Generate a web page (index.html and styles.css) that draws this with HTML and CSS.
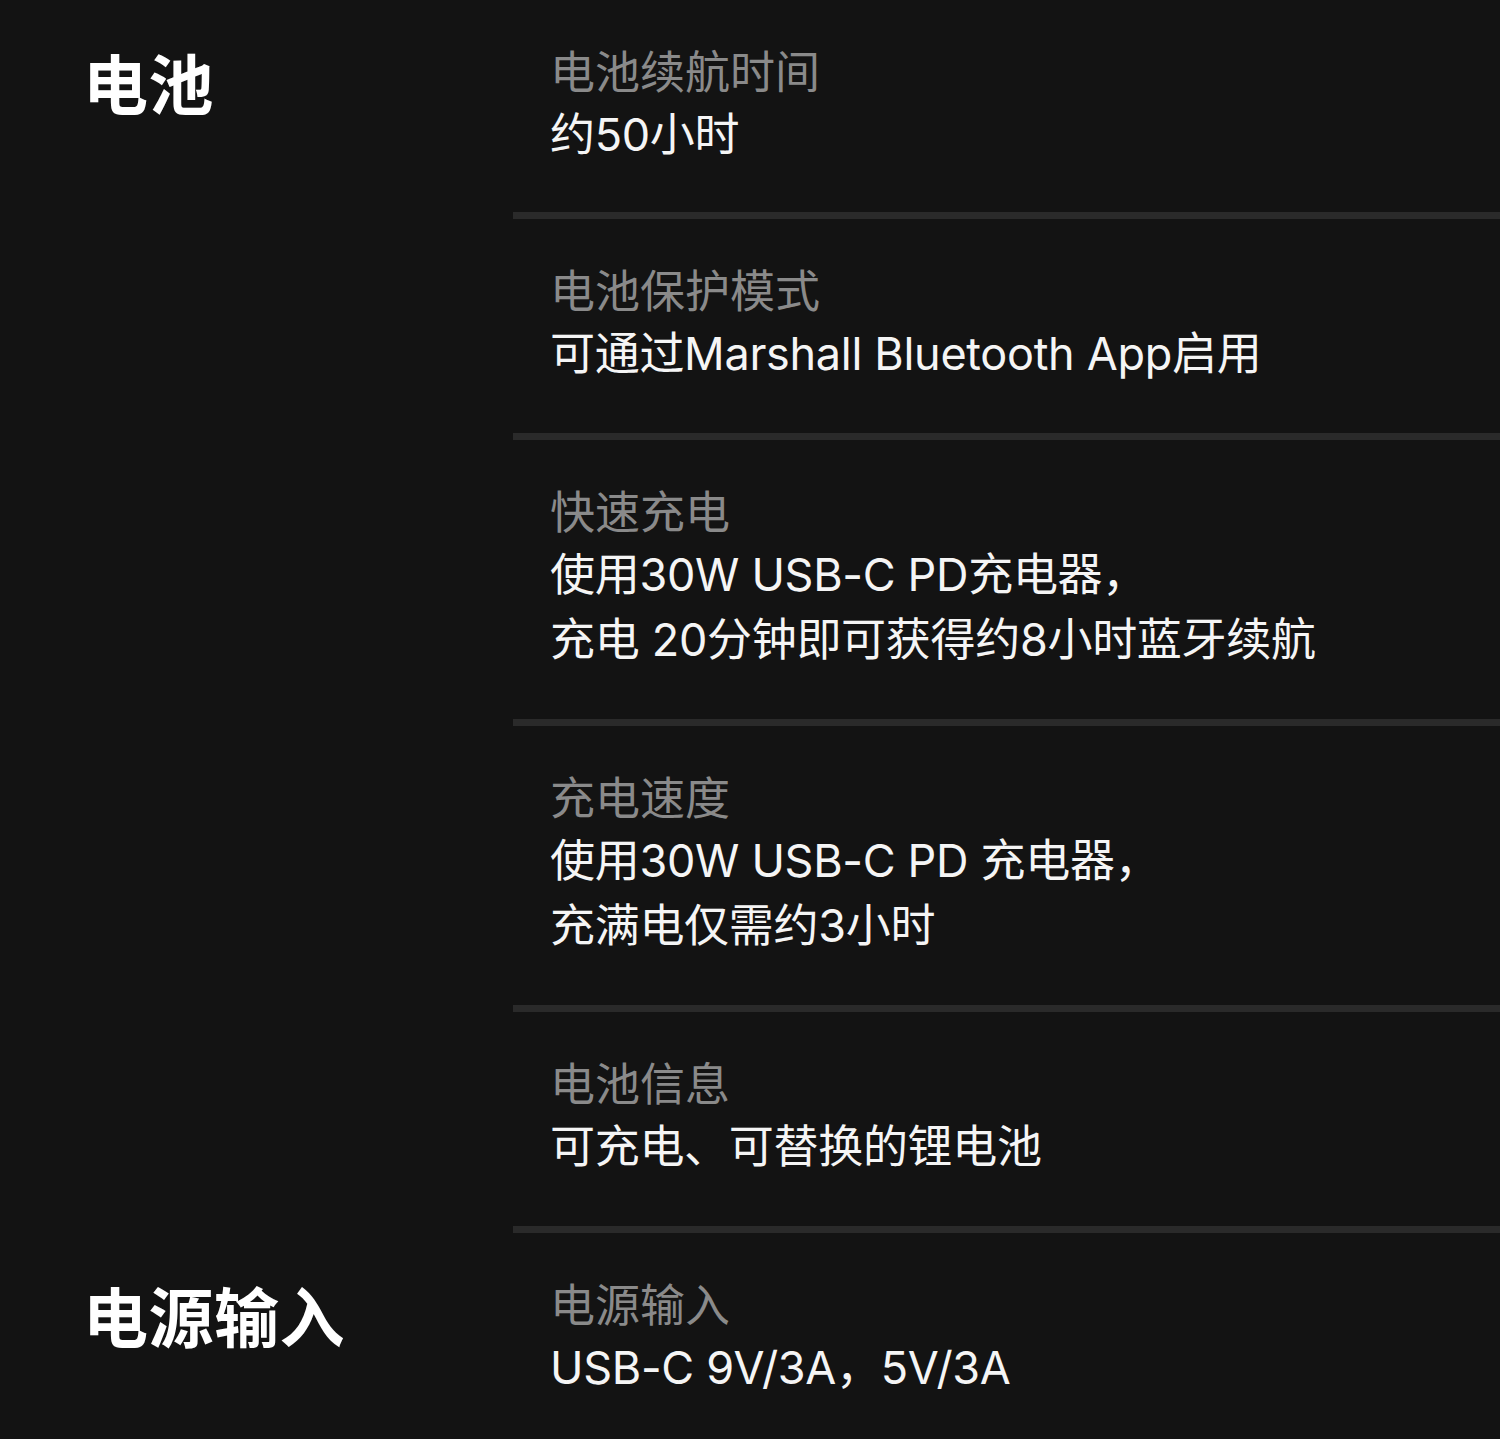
FILE: index.html
```html
<!DOCTYPE html>
<html lang="zh-CN">
<head>
<meta charset="utf-8">
<title>电池</title>
<link rel="stylesheet" href="styles.css">
</head>
<body>
<section class="group">
  <h2 class="group-title">电池</h2>
  <div class="items">
    <div class="item">
      <div class="label">电池续航时间</div>
      <div class="value">约50小时</div>
    </div>
    <div class="item">
      <div class="label">电池保护模式</div>
      <div class="value">可通过Marshall Bluetooth App启用</div>
    </div>
    <div class="item">
      <div class="label">快速充电</div>
      <div class="value">使用30W USB-C PD充电器，<br>充电 20分钟即可获得约8小时蓝牙续航</div>
    </div>
    <div class="item">
      <div class="label">充电速度</div>
      <div class="value">使用30W USB-C PD 充电器，<br>充满电仅需约3小时</div>
    </div>
    <div class="item">
      <div class="label">电池信息</div>
      <div class="value">可充电、可替换的锂电池</div>
    </div>
  </div>
</section>
<section class="group">
  <h2 class="group-title">电源输入</h2>
  <div class="items">
    <div class="item">
      <div class="label">电源输入</div>
      <div class="value">USB-C 9V/3A，5V/3A</div>
    </div>
  </div>
</section>
</body>
</html>
```
FILE: styles.css
```css
html, body {
  margin: 0;
  padding: 0;
  background: #131313;
}
body {
  font-family: "Inter", "Noto Sans CJK SC", sans-serif;
  color: #f5f5f5;
}
.group {
  display: grid;
  grid-template-columns: 513px 1fr;
}
.group-title {
  margin: 36px 0 0 0;
  padding-left: 83px;
  font-family: "Noto Sans CJK SC", sans-serif;
  font-size: 65px;
  font-weight: 700;
  line-height: 90px;
  color: #ffffff;
  letter-spacing: 0.5px;
}
.item {
  padding: 38px 0 47px 37px;
  border-bottom: 7px solid #2a2a2a;
}
.group:first-child .item:first-child {
  padding-bottom: 45px;
}
.label {
  font-family: "Noto Sans CJK SC", sans-serif;
  font-size: 45px;
  line-height: 64px;
  color: #8a8a8a;
}
.value {
  font-size: 45px;
  line-height: 65px;
  color: #f5f5f5;
  letter-spacing: -0.3px;
}
```
